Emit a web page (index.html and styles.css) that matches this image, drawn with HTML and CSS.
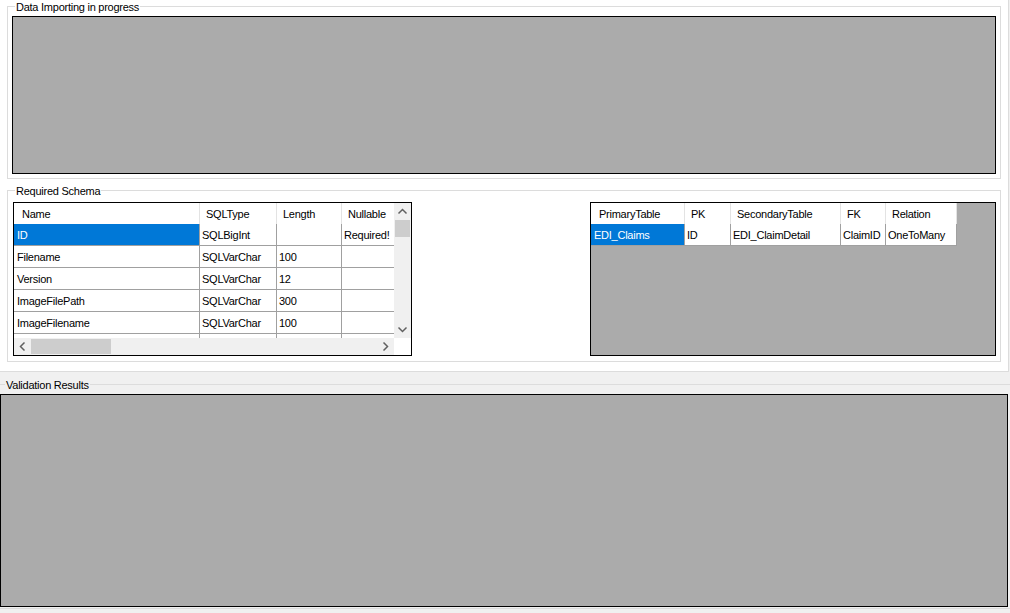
FILE: index.html
```html
<!DOCTYPE html>
<html>
<head>
<meta charset="utf-8">
<link rel="stylesheet" href="styles.css">
</head>
<body>
<div class="panel">
  <div class="group g1">
    <span class="caption">Data Importing in progress</span>
    <div class="workspace ws-top"></div>
  </div>
  <div class="group g2">
    <span class="caption">Required Schema</span>
    <div class="grid schema">
      <div class="cells">
        <div class="row head">
          <div class="c c1">Name</div><div class="c c2">SQLType</div><div class="c c3">Length</div><div class="c c4">Nullable</div>
        </div>
        <div class="row">
          <div class="c c1 sel">ID</div><div class="c c2">SQLBigInt</div><div class="c c3"></div><div class="c c4">Required!</div>
        </div>
        <div class="row">
          <div class="c c1">Filename</div><div class="c c2">SQLVarChar</div><div class="c c3">100</div><div class="c c4"></div>
        </div>
        <div class="row">
          <div class="c c1">Version</div><div class="c c2">SQLVarChar</div><div class="c c3">12</div><div class="c c4"></div>
        </div>
        <div class="row">
          <div class="c c1">ImageFilePath</div><div class="c c2">SQLVarChar</div><div class="c c3">300</div><div class="c c4"></div>
        </div>
        <div class="row">
          <div class="c c1">ImageFilename</div><div class="c c2">SQLVarChar</div><div class="c c3">100</div><div class="c c4"></div>
        </div>
        <div class="row">
          <div class="c c1"></div><div class="c c2"></div><div class="c c3"></div><div class="c c4"></div>
        </div>
      </div>
      <div class="vscroll">
        <div class="sbtn"><svg width="17" height="17" viewBox="0 0 17 17"><polyline points="4.5,10.5 8.5,6.5 12.5,10.5" fill="none" stroke="#606060" stroke-width="1.5"/></svg></div>
        <div class="vtrack"><div class="vthumb"></div></div>
        <div class="sbtn"><svg width="17" height="17" viewBox="0 0 17 17"><polyline points="4.5,6.5 8.5,10.5 12.5,6.5" fill="none" stroke="#606060" stroke-width="1.5"/></svg></div>
      </div>
      <div class="hscroll">
        <div class="sbtn"><svg width="17" height="17" viewBox="0 0 17 17"><polyline points="10.5,4.5 6.5,8.5 10.5,12.5" fill="none" stroke="#606060" stroke-width="1.5"/></svg></div>
        <div class="htrack"><div class="hthumb"></div></div>
        <div class="sbtn"><svg width="17" height="17" viewBox="0 0 17 17"><polyline points="6.5,4.5 10.5,8.5 6.5,12.5" fill="none" stroke="#606060" stroke-width="1.5"/></svg></div>
      </div>
      <div class="corner"></div>
    </div>
    <div class="grid relations">
      <div class="row head">
        <div class="c r1">PrimaryTable</div><div class="c r2">PK</div><div class="c r3">SecondaryTable</div><div class="c r4">FK</div><div class="c r5">Relation</div>
      </div>
      <div class="row">
        <div class="c r1 sel">EDI_Claims</div><div class="c r2">ID</div><div class="c r3">EDI_ClaimDetail</div><div class="c r4">ClaimID</div><div class="c r5">OneToMany</div>
      </div>
    </div>
  </div>
</div>
<div class="group g3">
  <span class="caption">Validation Results</span>
  <div class="workspace ws-bottom"></div>
</div>
</body>
</html>
```

FILE: styles.css
```css
* { box-sizing: border-box; }
body {
  margin: 0;
  background: #f0f0f0;
  font-family: "Liberation Sans", Arial, sans-serif;
  font-size: 11px;
  letter-spacing: -0.25px;
  color: #000;
  width: 1010px;
  height: 613px;
  overflow: hidden;
}
.panel {
  width: 1009px;
  height: 372px;
  background: #fff;
  border-right: 1px solid #dcdcdc;
  border-bottom: 1px solid #dcdcdc;
  padding: 6px 0 0 7px;
}
.group {
  position: relative;
  border: 1px solid #dcdcdc;
}
.caption {
  position: absolute;
  top: -6px;
  left: 7px;
  line-height: 13px;
  padding: 0 1px;
  background: #fff;
  white-space: nowrap;
}
.workspace {
  background: #ababab;
  border: 1px solid #000;
}
.g1 {
  width: 994px;
  height: 173px;
  padding: 9px 4px 4px 4px;
}
.ws-top { width: 984px; height: 158px; }
.g2 {
  margin-top: 11px;
  width: 994px;
  height: 172px;
  padding: 11px 4px 5px 5px;
  display: flex;
  justify-content: space-between;
}
.g3 {
  margin-top: 12px;
  width: 1010px;
  border-left: none;
  border-right: none;
  padding: 9px 0 1px 0;
}
.g3 .caption { left: 5px; background: #f0f0f0; }
.ws-bottom { width: 1008px; height: 213px; }

.grid {
  height: 154px;
  border: 1px solid #000;
}
.schema {
  width: 399px;
  background: #fff;
  display: grid;
  grid-template-columns: 380px 17px;
  grid-template-rows: 135px 17px;
}
.relations {
  width: 406px;
  background: #ababab;
}
.cells { overflow: hidden; }
.row { display: flex; height: 22px; }
.row.head { height: 21px; background: #fff; }
.relations .row { width: 366px; }
.c {
  flex: none;
  display: flex;
  align-items: center;
  padding-left: 2px;
  white-space: nowrap;
  overflow: hidden;
  background: #fff;
  border-right: 1px solid #a0a0a0;
  border-bottom: 1px solid #a0a0a0;
}
.head .c {
  border-bottom: none;
  border-right: 1px solid #e3e3e3;
  padding-left: 6px;
}
.head .c1, .head .r1 { padding-left: 8px; }
.c1, .r1 { padding-left: 3px; }
.c.sel { background: #0078d7; color: #fff; }
.c1 { width: 186px; }
.c2 { width: 77px; }
.c3 { width: 65px; }
.c4 { width: 60px; }
.r1 { width: 94px; }
.r2 { width: 46px; }
.r3 { width: 110px; }
.r4 { width: 45px; }
.r5 { width: 71px; }

.vscroll {
  background: #f0f0f0;
  display: flex;
  flex-direction: column;
}
.sbtn { width: 17px; height: 17px; flex: none; }
.sbtn svg { display: block; }
.vtrack { flex: 1; padding: 0 1px; }
.vthumb { height: 17px; background: #cdcdcd; }
.hscroll {
  background: #f0f0f0;
  display: flex;
}
.htrack { flex: 1; padding: 1px 0; }
.hthumb { width: 80px; height: 15px; background: #cdcdcd; }
.corner { background: #fff; }
```
